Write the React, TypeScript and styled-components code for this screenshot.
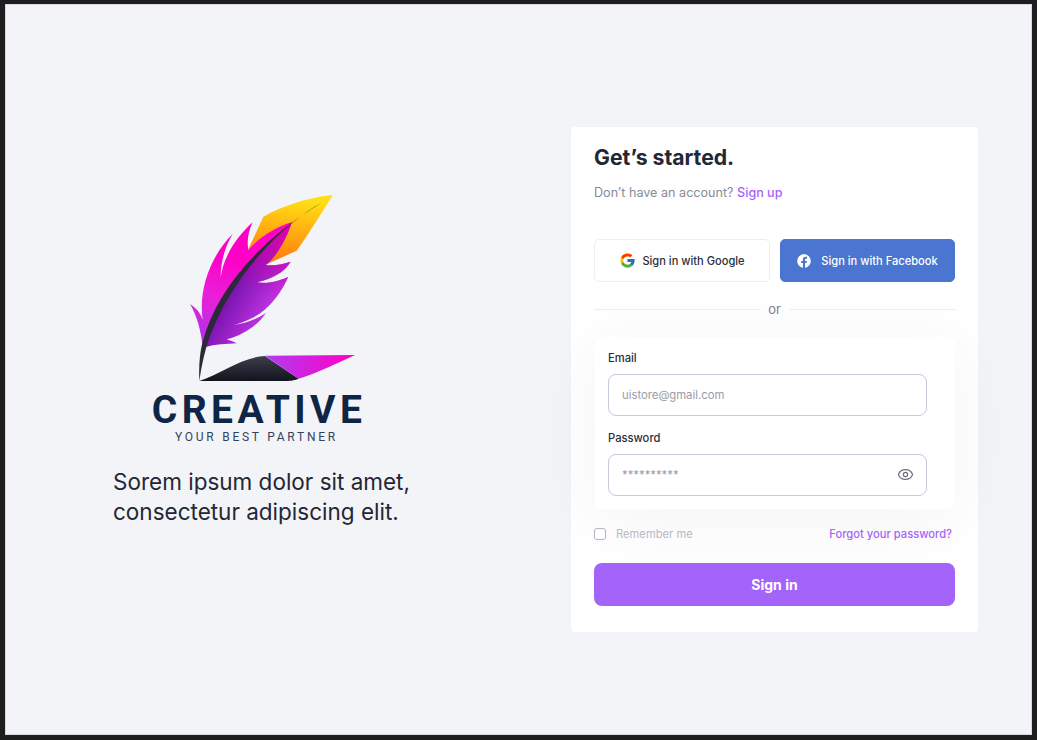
import styled, { createGlobalStyle } from "styled-components";
import { FcGoogle } from "react-icons/fc";
import { FaFacebook } from "react-icons/fa";
import { Eye } from "lucide-react";

const GlobalStyle = createGlobalStyle`
  html, body {
    margin: 0;
    padding: 0;
    background: #1e1e1e;
  }
  * {
    box-sizing: border-box;
  }
`;

const font = `"Inter", "Noto Sans", sans-serif`;

const Frame = styled.div`
  width: 1037px;
  height: 740px;
  background: #1e1e1e;
  padding: 4px 5px 5px 5px;
  font-family: ${font};
`;

const Screen = styled.main`
  height: 100%;
  background: #f3f4f8;
  border: 1px solid #d9d9de;
  display: flex;
  justify-content: space-between;
  padding: 122px 53px 0 107px;
`;

const Brand = styled.section`
  width: 320px;
  padding-top: 63px;
`;

const LogoWrap = styled.div`
  width: 212px;
  margin-left: 40px;
  display: flex;
  flex-direction: column;
  align-items: center;
`;

const Feather = styled.svg`
  display: block;
  width: 180px;
  height: 200px;
  align-self: flex-start;
  margin-left: 27px;
`;

const LogoName = styled.div`
  font-family: "Roboto", sans-serif;
  font-weight: 700;
  font-size: 39px;
  line-height: 32px;
  letter-spacing: 4.4px;
  color: #0f2545;
  margin-top: 4px;
  white-space: nowrap;
`;

const LogoTag = styled.div`
  font-family: "Roboto", sans-serif;
  font-size: 12px;
  line-height: 12px;
  letter-spacing: 2.75px;
  color: #33425e;
  margin: 5px 5px 0 0;
  white-space: nowrap;
`;

const Tagline = styled.p`
  margin: 24px 0 0;
  font-size: 22.5px;
  line-height: 30px;
  font-weight: 400;
  color: #232734;
  white-space: nowrap;
`;

const Card = styled.section`
  width: 407px;
  height: 505px;
  background: #fff;
  border-radius: 4px;
  padding: 16px 23px 0;
`;

const Title = styled.h1`
  margin: 0;
  font-size: 21.2px;
  line-height: 28px;
  font-weight: 700;
  color: #232734;
`;

const Subtitle = styled.p`
  margin: 13px 0 0;
  font-size: 12.6px;
  line-height: 18px;
  color: #8a8b98;
`;

const Accent = styled.a`
  color: #a463f9;
  font-weight: 500;
`;

const SocialRow = styled.div`
  display: grid;
  grid-template-columns: 176px 175px;
  gap: 10px;
  margin-top: 37px;
`;

const SocialButton = styled.button<{ $primary?: boolean }>`
  height: 43px;
  border-radius: 5px;
  border: 1px solid ${(p) => (p.$primary ? "#4a76d1" : "#eeeef2")};
  background: ${(p) => (p.$primary ? "#4a76d1" : "#fff")};
  color: ${(p) => (p.$primary ? "#fff" : "#2c2e3a")};
  font-family: ${font};
  font-size: 11.1px;
  font-weight: 500;
  display: flex;
  align-items: center;
  justify-content: center;
  gap: ${(p) => (p.$primary ? "10px" : "6px")};
  padding: 0;
`;

const Divider = styled.div`
  display: flex;
  align-items: center;
  gap: 9px;
  height: 18px;
  margin-top: 18px;
  font-size: 13px;
  color: #80818e;

  &::before,
  &::after {
    content: "";
    flex: 1;
    height: 1px;
    background: #eeeef1;
  }
`;

const FormBox = styled.div`
  position: relative;
  width: 360px;
  height: 172px;
  margin: 19px 0 0 1px;
  padding: 13px 28px 0 13px;
  background: #fff;
  border-radius: 6px;
  box-shadow: 0 10px 70px rgba(60, 60, 90, 0.06);
`;

const Label = styled.label`
  display: block;
  font-size: 11.2px;
  line-height: 16px;
  font-weight: 500;
  color: #2c2e3a;
  margin-bottom: 8px;
`;

const Field = styled.div`
  position: relative;
  height: 42px;
  margin-bottom: 14px;
`;

const Input = styled.input`
  width: 100%;
  height: 100%;
  border: 1px solid #c9c9d9;
  border-radius: 8px;
  background: #fff;
  padding: 0 13px;
  font-family: ${font};
  font-size: 11.3px;
  outline: none;

  &::placeholder {
    color: #9a9ba8;
    opacity: 1;
  }
`;

const EyeButton = styled.span`
  position: absolute;
  top: 12px;
  right: 13px;
  color: #6d6f7f;
  display: flex;
`;

const OptionsRow = styled.div`
  position: relative;
  display: flex;
  align-items: center;
  justify-content: space-between;
  height: 18px;
  margin-top: 16px;
  padding-right: 3px;
  font-size: 11.2px;
`;

const Remember = styled.label`
  display: flex;
  align-items: center;
  gap: 10px;
  color: #b9b9c6;
`;

const Check = styled.span`
  width: 12px;
  height: 12px;
  border: 1px solid #b5b5c4;
  border-radius: 3px;
  background: #fff;
`;

const SubmitButton = styled.button`
  position: relative;
  display: block;
  width: 361px;
  height: 43px;
  margin-top: 20px;
  border: none;
  border-radius: 8px;
  background: #a463f9;
  color: #fff;
  font-family: ${font};
  font-size: 14px;
  font-weight: 700;
`;

const rightVanePath =
  "M335 97 C325 130 300 190 258 225 C285 228 310 222 332 215 C315 245 280 265 232 277 C265 282 300 272 325 260 C300 315 265 360 215 385 C195 395 180 400 160 405 C195 402 230 388 258 368 C235 405 190 435 140 448 C150 452 160 454 170 460 C140 462 105 462 75 472 C120 300 220 180 335 97Z";

const FeatherMark = () => (
  <Feather viewBox="0 0 540 600" aria-label="Creative logo">
    <defs>
      <linearGradient id="tip" x1="0.6" y1="0" x2="0.45" y2="1">
        <stop offset="0.1" stopColor="#ffdc14" />
        <stop offset="0.5" stopColor="#ffb012" />
        <stop offset="0.95" stopColor="#ff8010" />
      </linearGradient>
      <linearGradient id="leftVane" gradientUnits="userSpaceOnUse" x1="200" y1="120" x2="60" y2="470">
        <stop offset="0.25" stopColor="#ff00c6" />
        <stop offset="0.6" stopColor="#e820d8" />
        <stop offset="1" stopColor="#a835e8" />
      </linearGradient>
      <linearGradient id="rightVane" gradientUnits="userSpaceOnUse" x1="155" y1="270" x2="285" y2="350">
        <stop offset="0" stopColor="#6f0fa8" />
        <stop offset="1" stopColor="#c535e6" />
      </linearGradient>
      <linearGradient id="rightTop" gradientUnits="userSpaceOnUse" x1="300" y1="110" x2="220" y2="300">
        <stop offset="0" stopColor="#e000a8" />
        <stop offset="1" stopColor="#d000b0" stopOpacity="0" />
      </linearGradient>
      <linearGradient id="penDark" x1="0" y1="0" x2="0" y2="1">
        <stop offset="0" stopColor="#3c404c" />
        <stop offset="1" stopColor="#11131d" />
      </linearGradient>
      <linearGradient id="penPink" x1="0" y1="0" x2="1" y2="0">
        <stop offset="0" stopColor="#b03cf2" />
        <stop offset="1" stopColor="#ff00c4" />
      </linearGradient>
    </defs>
    <path
      fill="url(#tip)"
      d="M458 15 C380 24 305 48 250 80 L205 178 L262 222 L350 182 C390 125 430 62 458 15Z"
    />
    <path
      fill="url(#leftVane)"
      d="M68 470 C62 420 52 380 30 342 C50 355 62 370 68 390 C55 300 90 200 158 132 C135 170 122 215 122 262 C130 200 170 140 218 97 C205 125 200 150 205 180 C240 140 290 110 335 97 C220 180 120 300 68 470Z"
    />
    <path fill="url(#rightVane)" d={rightVanePath} />
    <path fill="url(#rightTop)" d={rightVanePath} />
    <path
      fill="#2c2a38"
      d="M425 38 C322 94 165 240 89 440 C74 482 64 530 58 573 C56 530 59 490 67 459 C109 298 240 150 425 38Z"
    />
    <path
      fill="url(#penDark)"
      d="M58 573 C120 552 190 500 255 498 L356 566 C340 572 330 573 310 573Z"
    />
    <path fill="url(#penPink)" d="M255 497 L525 495 C470 520 410 550 356 566Z" />
  </Feather>
);

export default function App() {
  return (
    <Frame>
      <GlobalStyle />
      <Screen>
        <Brand>
          <LogoWrap>
            <FeatherMark />
            <LogoName>CREATIVE</LogoName>
            <LogoTag>YOUR BEST PARTNER</LogoTag>
          </LogoWrap>
          <Tagline>
            Sorem ipsum dolor sit amet,
            <br />
            consectetur adipiscing elit.
          </Tagline>
        </Brand>
        <Card>
          <Title>Get’s started.</Title>
          <Subtitle>
            Don’t have an account? <Accent>Sign up</Accent>
          </Subtitle>
          <SocialRow>
            <SocialButton>
              <FcGoogle size={17} />
              Sign in with Google
            </SocialButton>
            <SocialButton $primary>
              <FaFacebook size={14} />
              Sign in with Facebook
            </SocialButton>
          </SocialRow>
          <Divider>or</Divider>
          <FormBox>
            <Label>Email</Label>
            <Field>
              <Input placeholder="uistore@gmail.com" />
            </Field>
            <Label>Password</Label>
            <Field>
              <Input placeholder="**********" />
              <EyeButton>
                <Eye size={17} strokeWidth={1.7} />
              </EyeButton>
            </Field>
          </FormBox>
          <OptionsRow>
            <Remember>
              <Check />
              Remember me
            </Remember>
            <Accent>Forgot your password?</Accent>
          </OptionsRow>
          <SubmitButton>Sign in</SubmitButton>
        </Card>
      </Screen>
    </Frame>
  );
}
